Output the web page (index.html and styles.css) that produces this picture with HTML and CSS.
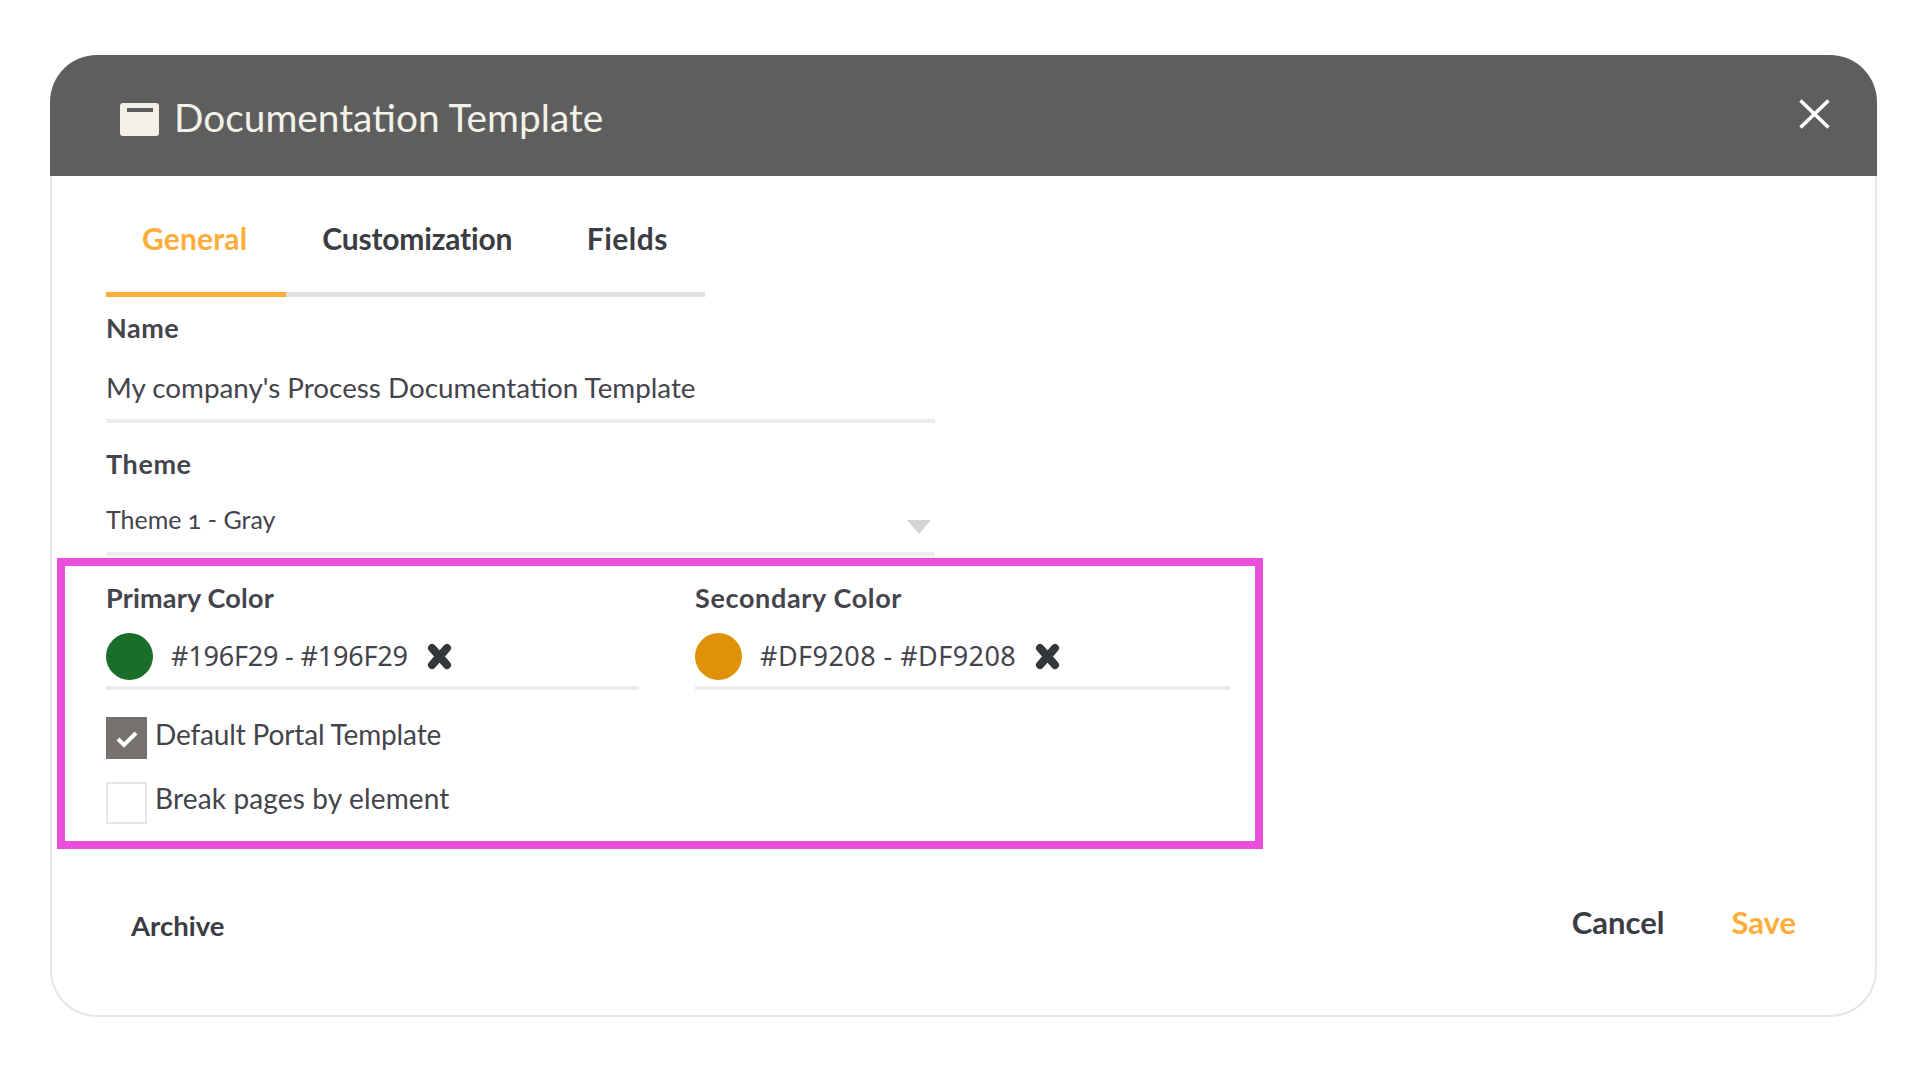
FILE: index.html
```html
<!DOCTYPE html>
<html lang="en">
<head>
<meta charset="utf-8">
<title>Documentation Template</title>
<link rel="stylesheet" href="styles.css">
</head>
<body>
<main class="page">
  <section class="dialog">
    <header class="dialog-header">
      <svg class="header-icon" viewBox="0 0 39 33" aria-hidden="true"><path fill="#f3f0e6" fill-rule="evenodd" d="M3 0h33a3 3 0 0 1 3 3v27a3 3 0 0 1-3 3H3a3 3 0 0 1-3-3V3a3 3 0 0 1 3-3zm4 5v4h26V5z"/></svg>
      <h1 class="dialog-title">Documentation Template</h1>
      <svg class="close-icon" viewBox="0 0 31 30" aria-hidden="true"><path d="M1.5 1.5l28 27M29.5 1.5l-28 27" stroke="#fff" stroke-width="3.6" fill="none"/></svg>
    </header>
    <div class="dialog-body">
      <nav class="tabs">
        <a class="tab tab-active">General</a>
        <a class="tab tab-custom">Customization</a>
        <a class="tab tab-fields">Fields</a>
      </nav>

      <div class="label label-name">Name</div>
      <div class="field field-name">My company's Process Documentation Template</div>

      <div class="label label-theme">Theme</div>
      <div class="field field-theme">
        <span class="theme-value">Theme 1 - Gray</span>
        <svg class="caret" viewBox="0 0 24 14" aria-hidden="true"><path d="M0 0h24L12 14z" fill="#d4d4d4"/></svg>
      </div>

      <div class="colors">
        <div class="color-col">
          <div class="label label-primary">Primary Color</div>
          <div class="swatch-row">
            <span class="swatch swatch-green"></span>
            <span class="hex hex-primary">#196F29 - #196F29</span>
            <svg class="clear-icon" viewBox="0 0 25 27" aria-hidden="true"><path d="M5 5l15 17M20 5L5 22" stroke="#33363a" stroke-width="8" stroke-linecap="round" fill="none"/></svg>
          </div>
        </div>
        <div class="color-col">
          <div class="label label-secondary">Secondary Color</div>
          <div class="swatch-row">
            <span class="swatch swatch-orange"></span>
            <span class="hex hex-secondary">#DF9208 - #DF9208</span>
            <svg class="clear-icon" viewBox="0 0 25 27" aria-hidden="true"><path d="M5 5l15 17M20 5L5 22" stroke="#33363a" stroke-width="8" stroke-linecap="round" fill="none"/></svg>
          </div>
        </div>
      </div>

      <div class="check-row check-first">
        <span class="checkbox checkbox-on">
          <svg viewBox="0 0 24 20" aria-hidden="true"><path d="M3 10l6 6L21 4" stroke="#fff" stroke-width="4" fill="none"/></svg>
        </span>
        <span class="check-text check-default">Default Portal Template</span>
      </div>
      <div class="check-row check-second">
        <span class="checkbox"></span>
        <span class="check-text check-break">Break pages by element</span>
      </div>

      <footer class="footer">
        <a class="btn btn-archive">Archive</a>
        <div class="footer-right">
          <a class="btn btn-cancel">Cancel</a>
          <a class="btn btn-save">Save</a>
        </div>
      </footer>
    </div>
    <div class="highlight"></div>
  </section>
</main>
</body>
</html>
```
FILE: styles.css
```css
* { box-sizing: border-box; }
html, body { margin: 0; background: #fff; }
body {
  font-family: "Lato", "Noto Sans", sans-serif;
  color: #44444c;
}
.page { height: 1080px; padding: 55px 43px 0 50px; overflow: hidden; }
.dialog {
  position: relative;
  height: 962px;
  display: flex;
  flex-direction: column;
}
.dialog-header {
  height: 121px;
  flex: none;
  background: #5e5e5e;
  border-radius: 47px 47px 0 0;
  display: flex;
  align-items: flex-start;
  padding: 0 47px 0 70px;
}
.header-icon { width: 39px; height: 33px; margin-top: 48px; flex: none; }
.dialog-title {
  margin: 39px 0 0 15px;
  font-size: 38.8px;
  line-height: 46px;
  font-weight: 400;
  color: #f3f1e8;
}
.close-icon { width: 31px; height: 30px; margin: 44px 0 0 auto; flex: none; }
.dialog-body {
  flex: 1;
  border: 2px solid #e6e6e6;
  border-top: 0;
  border-radius: 0 0 47px 47px;
  padding: 0 0 0 54px;
}
.tabs {
  display: inline-flex;
  border-bottom: 5px solid #e2e2e2;
  vertical-align: top;
}
.tab {
  padding: 42px 36px 34px;
  font-size: 30px;
  line-height: 40px;
  font-weight: 700;
  letter-spacing: -0.2px;
  color: #3c3c44;
  margin-bottom: -5px;
  border-bottom: 5px solid transparent;
}
.tab-active {
  padding-right: 39px;
  letter-spacing: 0.15px;
  color: #fdad3a;
  border-bottom-color: #fdad3a;
}
.tab-custom { padding-right: 38.5px; }
.tab-fields { padding-right: 37px; letter-spacing: 0.5px; }
.label {
  font-size: 27px;
  line-height: 30px;
  font-weight: 700;
  letter-spacing: 0.4px;
  color: #44444c;
}
.label-name { margin-top: 16px; letter-spacing: 0.5px; }
.label-theme { margin-top: 26px; letter-spacing: 0.6px; }
.label-primary { letter-spacing: 0.2px; }
.label-secondary { letter-spacing: 0.65px; }
.field {
  width: 829px;
  border-bottom: 4px solid #ececec;
  line-height: 40px;
}
.field-name { padding: 25px 0 11px; font-size: 27.8px; }
.field-theme {
  padding: 20px 4px 13px 0;
  font-size: 25px;
  font-variant-numeric: oldstyle-nums;
  display: flex;
  justify-content: space-between;
  align-items: flex-start;
}
.caret { width: 24px; height: 14px; margin-top: 21px; flex: none; }
.colors {
  display: grid;
  grid-template-columns: 533px 535px;
  column-gap: 56px;
  margin-top: 27px;
}
.swatch-row {
  margin-top: 20px;
  padding-bottom: 6px;
  border-bottom: 4px solid #ececec;
  display: flex;
  align-items: flex-start;
}
.swatch { width: 47px; height: 47px; border-radius: 50%; flex: none; }
.swatch-green { background: #196f29; }
.swatch-orange { background: #df9208; }
.hex {
  margin-left: 18px;
  font-family: "Noto Sans", sans-serif;
  font-size: 27px;
  line-height: 46px;
}
.hex-primary { letter-spacing: -0.2px; }
.hex-secondary { letter-spacing: 0.45px; }
.clear-icon { width: 25px; height: 27px; margin: 10px 0 0 19px; flex: none; }
.check-row { display: flex; align-items: flex-start; }
.check-first { margin-top: 27px; }
.check-second { margin-top: 23px; }
.checkbox {
  width: 41px;
  height: 42px;
  flex: none;
  border: 2px solid #e6e6e6;
  background: #fff;
  display: flex;
  align-items: center;
  justify-content: center;
}
.checkbox-on { background: #75726d; border-color: #75726d; }
.checkbox svg { width: 24px; height: 20px; margin-top: 2px; }
.check-text { margin-left: 8px; font-size: 28px; line-height: 34px; }
.check-default { letter-spacing: -0.15px; }
.check-break { letter-spacing: 0.15px; line-height: 32px; }
.footer {
  display: flex;
  justify-content: space-between;
  align-items: flex-start;
  margin-top: 79px;
  padding: 0 79px 0 25px;
}
.footer-right { display: flex; column-gap: 67px; }
.btn { font-size: 31px; line-height: 38px; font-weight: 700; color: #3c3c44; }
.btn-archive { margin-top: 4px; font-size: 27.5px; }
.btn-save { color: #fdad3a; }
.highlight {
  position: absolute;
  left: 7px;
  top: 503px;
  width: 1206px;
  height: 291px;
  border: 8px solid #ea4fdc;
  pointer-events: none;
}
```
